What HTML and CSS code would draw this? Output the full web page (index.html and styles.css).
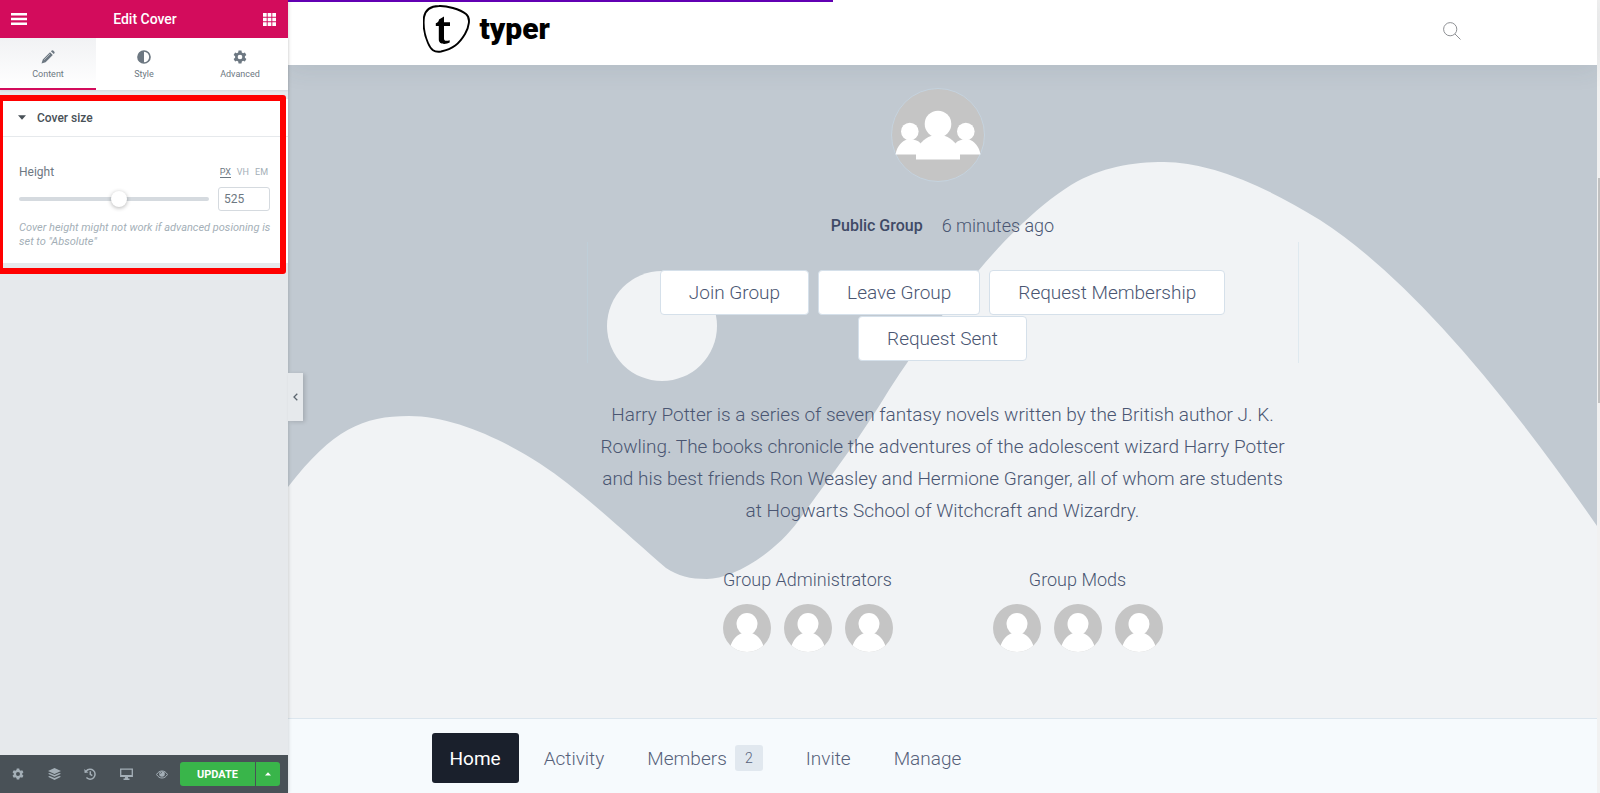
FILE: index.html
```html
<!DOCTYPE html>
<html lang="en">
<head>
<meta charset="utf-8">
<title>Edit Cover</title>
<link rel="stylesheet" href="styles.css">
</head>
<body>
<svg class="defs" aria-hidden="true">
  <symbol id="person" viewBox="0 0 48 48">
    <rect width="48" height="48" fill="#c5c5c5"/>
    <ellipse cx="24" cy="20" rx="10.500" ry="11" fill="#fff"/>
    <path d="M7 44C9 35 15 30 20 29L24 27L28 29C33 30 39 35 41 44V48H7Z" fill="#fff"/>
  </symbol>
</svg>
<div class="app">
  <aside class="panel">
    <header class="panel-head">
      <button class="icon-btn" aria-label="Menu"><svg width="16" height="12" viewBox="0 0 16 12" fill="#fff"><path d="M0 0h16v2.600H0zM0 4.700h16v2.600H0zM0 9.400h16V12H0z"/></svg></button>
      <h1>Edit Cover</h1>
      <button class="icon-btn" aria-label="Widgets"><svg width="13" height="13" viewBox="0 0 13 13" fill="#fff"><path d="M0 0h3.700v3.700H0zM4.650 0h3.700v3.700h-3.700zM9.300 0H13v3.700H9.300zM0 4.650h3.700v3.700H0zM4.650 4.650h3.700v3.700h-3.700zM9.300 4.650H13v3.700H9.300zM0 9.300h3.700V13H0zM4.650 9.300h3.700V13h-3.700zM9.300 9.300H13V13H9.300z"/></svg></button>
    </header>
    <nav class="tabs">
      <button class="tab active"><svg width="14" height="14" viewBox="0 0 14 14" fill="#6d7882"><path d="M9 2.200L11.800 5L4.600 12.200L.5 13.500L1.800 9.400ZM9.900 1.300L10.800.5Q11.500 0 12.200.6L13.400 1.800Q14 2.500 13.400 3.200L12.700 4.100Z"/><path d="M3.200 9.800L9 4" stroke="#f5f6f7" stroke-width=".5" fill="none"/></svg>Content</button>
      <button class="tab"><svg width="14" height="14" viewBox="0 0 14 14"><circle cx="7" cy="7" r="6" fill="none" stroke="#6d7882" stroke-width="1.700"/><path d="M7 1a6 6 0 0 0 0 12z" fill="#6d7882"/></svg>Style</button>
      <button class="tab"><svg width="14" height="14" viewBox="0 0 24 24"><path fill="#6d7882" fill-rule="evenodd" d="M9.500 1h5l.6 3.200 2.200 1.300 3.100-1.100 2.500 4.300-2.500 2.100v2.400l2.500 2.100-2.500 4.300-3.100-1.100-2.200 1.300-.6 3.200h-5l-.6-3.200-2.200-1.300-3.100 1.100-2.500-4.300 2.500-2.100v-2.400L1.100 8.700l2.500-4.300 3.100 1.100 2.200-1.300zM12 8a4 4 0 1 0 0 8 4 4 0 0 0 0-8z"/></svg>Advanced</button>
    </nav>
    <section class="section">
      <button class="section-head" aria-expanded="true"><svg width="8" height="5" viewBox="0 0 8 5" fill="#495157"><path d="M0 .3h8L4 4.800z"/></svg>Cover size</button>
      <div class="section-body">
        <div class="control-row">
          <label for="height-range">Height</label>
          <div class="units"><button class="unit on">PX</button><button class="unit">VH</button><button class="unit">EM</button></div>
        </div>
        <div class="slider-row">
          <input id="height-range" class="range" type="range" min="0" max="1000" value="530">
          <input class="number" type="text" value="525" aria-label="Height value">
        </div>
        <p class="note">Cover height might not work if advanced posioning is set to "Absolute"</p>
      </div>
      <div class="highlight"></div>
    </section>
    <footer class="panel-foot">
      <div class="tools">
        <button class="tool" aria-label="Settings"><svg width="12" height="12" viewBox="0 0 24 24"><path fill="#a4afb7" fill-rule="evenodd" d="M9.500 1h5l.6 3.200 2.200 1.300 3.100-1.100 2.500 4.300-2.500 2.100v2.400l2.500 2.100-2.500 4.300-3.100-1.100-2.200 1.300-.6 3.200h-5l-.6-3.200-2.200-1.300-3.100 1.100-2.500-4.300 2.500-2.100v-2.400L1.100 8.700l2.500-4.300 3.100 1.100 2.200-1.300zM12 8a4 4 0 1 0 0 8 4 4 0 0 0 0-8z"/></svg></button>
        <button class="tool" aria-label="Navigator"><svg width="13" height="12" viewBox="0 0 13 12" fill="#a4afb7"><path d="M6.500 0L13 3L6.500 6L0 3ZM1.700 4.900L6.500 7L11.300 4.900L13 5.800L6.500 8.800L0 5.800ZM1.700 7.900L6.500 10L11.300 7.900L13 8.800L6.500 12L0 8.800Z"/></svg></button>
        <button class="tool" aria-label="History"><svg width="12" height="12" viewBox="0 0 12 12" fill="none" stroke="#a4afb7" stroke-width="1.500"><path d="M2.200 3A5 5 0 1 1 2.400 9.600M6.300 3.300V6.400L8.300 7.700"/><path d="M.3 1L.6 4.900L4.400 4.500Z" fill="#a4afb7" stroke="none"/></svg></button>
        <button class="tool" aria-label="Responsive mode"><svg width="13" height="12" viewBox="0 0 13 12"><path d="M.7 1.200h11.600v7.200H.7z" fill="none" stroke="#a4afb7" stroke-width="1.300"/><path d="M1 7h11v1.500H1zM5.200 8.500h2.600l.4 2h1.300V12h-6v-1.500h1.300z" fill="#a4afb7"/></svg></button>
        <button class="tool" aria-label="Preview"><svg width="12" height="9" viewBox="0 0 12 9"><path d="M.6 4.500C3-.2 9-.2 11.400 4.500C9 9.200 3 9.200.6 4.500Z" fill="none" stroke="#a4afb7" stroke-width="1"/><circle cx="6" cy="4" r="2.800" fill="#a4afb7"/><path d="M4.500 3.800Q4.600 2.500 6 2.400" fill="none" stroke="#495157" stroke-width=".7"/></svg></button>
      </div>
      <div class="update"><button class="save">UPDATE</button><button class="more" aria-label="Save options"><svg width="6" height="4" viewBox="0 0 6 4" fill="#fff"><path d="M0 3.600L3 .3L6 3.600Z"/></svg></button></div>
    </footer>
    <button class="collapse" aria-label="Collapse panel"><svg width="5" height="8" viewBox="0 0 5 8" fill="none" stroke="#5c666f" stroke-width="1.300"><path d="M4.300.8L1 4L4.300 7.200"/></svg></button>
  </aside>

  <main class="site">
    <header class="site-head">
      <div class="progress"></div>
      <div class="container">
        <a class="brand" href="#">
          <svg width="48" height="48" viewBox="0 0 48 48"><path d="M16 1C23 .6 37 4 43 9C48 13 46 22 42 29C36 39 30 44 18 46.500C11 47.500 8 45 5 38C1 29 0 20 1 12C2.500 4 8.200 1.200 16 1Z" fill="none" stroke="#000" stroke-width="1.900"/><path d="M16 14.500L21 11.500V17.300H27V21H21V33.500C21 36 23 36.300 26.700 35.200V37.600C23 39.500 15.800 40 15.800 34.500V21H12.800V18.300C14.500 17.900 15.800 16.500 16 14.500Z"/></svg>
          <span>typer</span>
        </a>
        <button class="search" aria-label="Search"><svg width="18" height="18" viewBox="0 0 18 18" fill="none" stroke="#8e9094" stroke-width="1"><circle cx="7.200" cy="7.200" r="6.600"/><path d="M12 12L17.500 17.500"/></svg></button>
      </div>
    </header>

    <section class="cover">
      <svg class="waves" viewBox="0 0 1309 653" preserveAspectRatio="xMidYMid slice" aria-hidden="true">
        <path d="M0 422C45 364 75 351 121 351C175 351 240 387 279 418C310 442 350 479 378 503C390 511 402 514 419 514C442 514 484 492 511 455C545 408 572 373 601 325C630 279 660 243 691 205C722 168 753 139 783 120C813 102 845 97 876 97Q938 97 1032 155Q1150 231 1309 461V653H0Z"/>
        <circle cx="374" cy="261" r="55"/>
      </svg>
      <div class="cover-inner">
        <svg class="group-avatar" viewBox="0 0 94 94" role="img" aria-label="Group">
          <circle cx="47" cy="47" r="46.500" fill="#c5c5c5" stroke="#c5d3df"/>
          <g fill="#fff"><circle cx="47" cy="36" r="13.300"/><path d="M25 71.500V65C27 57 33 50 40 48L47 46L54 48C61 50 67 57 69 65V71.500Z"/><circle cx="18.800" cy="43.500" r="8.800"/><path d="M4.500 66.500C6 58 11 53 16 51.500H22C26 52 29 54 31 57L27 66.500Z"/><circle cx="74.800" cy="43.500" r="8.800"/><path d="M89.500 66.500C88 58 83 53 78 51.500H72C68 52 65 54 63 57L67 66.500Z"/></g>
        </svg>
        <div class="meta"><strong>Public Group</strong><span>6 minutes ago</span></div>
        <div class="actions">
          <button>Join Group</button><button>Leave Group</button><button>Request Membership</button><button>Request Sent</button>
        </div>
        <p class="about">Harry Potter is a series of seven fantasy novels written by the British author J. K.<br>Rowling. The books chronicle the adventures of the adolescent wizard Harry Potter<br>and his best friends Ron Weasley and Hermione Granger, all of whom are students<br>at Hogwarts School of Witchcraft and Wizardry.</p>
        <div class="people">
          <div class="people-col"><h2>Group Administrators</h2><div class="faces"><svg><use href="#person"/></svg><svg><use href="#person"/></svg><svg><use href="#person"/></svg></div></div>
          <div class="people-col"><h2>Group Mods</h2><div class="faces"><svg><use href="#person"/></svg><svg><use href="#person"/></svg><svg><use href="#person"/></svg></div></div>
        </div>
      </div>
    </section>

    <nav class="group-nav">
      <div class="container">
        <a class="current" href="#">Home</a><a href="#">Activity</a><a href="#">Members<span class="count">2</span></a><a href="#">Invite</a><a href="#">Manage</a>
      </div>
    </nav>
  </main>
  <div class="scrollbar"><div class="thumb"></div></div>
</div>
</body>
</html>
```
FILE: styles.css
```css
* { box-sizing: border-box; }
body { margin: 0; font-family: Roboto, "Liberation Sans", sans-serif; }
button { font: inherit; color: inherit; border: 0; background: none; padding: 0; margin: 0; }
h1, h2, p { margin: 0; }
.defs { display: none; }
.app { display: flex; min-height: 100vh; }

/* Editor panel */
.panel { position: relative; z-index: 2; flex: 0 0 288px; display: flex; flex-direction: column; background: #e6e9ec; box-shadow: 0 0 4px rgba(0, 0, 0, .2); color: #6d7882; }
.panel-head { display: flex; align-items: center; justify-content: space-between; height: 38px; padding: 0 12px 0 11px; background: #d30c5c; color: #fff; }
.panel-head h1 { font-size: 14px; font-weight: 500; }
.icon-btn { display: flex; }
.tabs { display: flex; height: 52px; background: #fff; box-shadow: 0 1px 2px rgba(0, 0, 0, .08); }
.tab { flex: 1; display: flex; flex-direction: column; align-items: center; gap: 4px; padding-top: 12px; font-size: 9px; line-height: 12px; border-bottom: 2px solid transparent; }
.tab.active { background: linear-gradient(#f1f2f4, #fff); border-bottom-color: #d30c5c; }
.section { position: relative; margin-top: 9px; background: #fff; }
.section-head { display: flex; align-items: center; gap: 11px; width: 100%; height: 38px; padding: 0 18px; border-bottom: 1px solid #e6e9ec; font-size: 12px; font-weight: 500; color: #495157; }
.section-body { padding: 26px 18px 14px 19px; }
.control-row { display: flex; justify-content: space-between; align-items: center; height: 18px; font-size: 12px; }
.units { display: flex; gap: 6px; padding: 2px 2px 0 0; }
.unit { font-size: 9px; line-height: 9px; color: #a4afb7; border-bottom: 1px solid transparent; }
.unit.on { color: #6d7882; border-bottom-color: #6d7882; }
.slider-row { display: flex; align-items: center; gap: 9px; margin-top: 6px; }
.range { flex: 1; min-width: 0; margin: 0; height: 16px; appearance: none; background: none; }
.range::-webkit-slider-runnable-track { height: 4px; border-radius: 2px; background: #d5dadf; }
.range::-webkit-slider-thumb { appearance: none; width: 16px; height: 16px; margin-top: -6px; border-radius: 50%; background: #fff; box-shadow: 0 1px 4px rgba(0, 0, 0, .3); }
.number { width: 52px; height: 24px; padding: 0 5px; border: 1px solid #d5dadf; border-radius: 3px; font: 12px Roboto, sans-serif; color: #6d7882; }
.note { margin: 10px -8px 0 0; font-size: 11px; line-height: 14px; font-style: italic; color: #a4afb7; }
.highlight { position: absolute; inset: -4px 2px -11px -3px; border: 6px solid #f00; border-radius: 3px; pointer-events: none; }
.panel-foot { display: flex; align-items: center; justify-content: space-between; height: 38px; margin-top: auto; padding-right: 8px; background: #495157; }
.tools { display: flex; }
.tool { display: flex; align-items: center; justify-content: center; width: 36px; height: 38px; }
.update { display: flex; gap: 1px; height: 24px; color: #fff; }
.save { width: 75px; background: #39b54a; border-radius: 3px 0 0 3px; font-size: 11px; font-weight: 700; }
.more { display: flex; align-items: center; justify-content: center; width: 24px; background: #39b54a; border-radius: 0 3px 3px 0; }
.collapse { position: absolute; left: 100%; top: 47%; display: flex; align-items: center; justify-content: center; width: 15px; height: 48px; background: #e6e9ec; box-shadow: 2px 1px 4px rgba(0, 0, 0, .15); }

/* Site preview */
.site { flex: 1; min-width: 0; display: flex; flex-direction: column; color: #4a5672; }
.container { display: flex; align-items: center; width: 100%; max-width: 1040px; margin: 0 auto; }
.site-head { position: relative; z-index: 1; height: 65px; background: #fff; box-shadow: 0 4px 24px rgba(60, 75, 90, .1); }
.site-head .container { justify-content: space-between; padding-top: 5px; }
.progress { position: absolute; left: 0; top: 0; width: 41.6%; height: 2px; background: #6200b3; }
.brand { display: flex; align-items: center; gap: 9px; color: #000; text-decoration: none; font-size: 30px; line-height: 48px; font-weight: 900; }
.search { display: flex; padding: 4px 2px 0; }
.cover { position: relative; flex: 1; background: #c1c9d1; }
.waves { position: absolute; inset: 0; width: 100%; height: 100%; fill: #f1f3f5; }
.cover-inner { position: relative; display: flex; flex-direction: column; align-items: center; padding: 23px 16px 66px; }
.group-avatar { width: 94px; height: 94px; margin-right: 9px; }
.meta { display: flex; gap: 19px; margin-top: 28px; font-size: 18px; line-height: 32px; font-weight: 300; }
.meta strong { font-size: 16px; font-weight: 500; color: #3f4a66; }
.actions { display: flex; flex-wrap: wrap; justify-content: center; gap: 1px 9px; width: 100%; max-width: 712px; padding: 28px 56px 2px; border: solid rgba(190, 215, 228, .35); border-width: 0 1px; }
.actions button { height: 45px; padding: 0 28px; border: 1px solid #d5e0ea; border-radius: 4px; background: #fff; font-size: 19px; font-weight: 300; }
.about { margin-top: 36px; font-size: 19px; line-height: 32px; font-weight: 300; text-align: center; }
.people { display: grid; grid-template-columns: 1fr 1fr; width: 100%; max-width: 540px; margin-top: 41px; }
.people-col { display: flex; flex-direction: column; align-items: center; gap: 12px; }
.people h2 { font-size: 18px; line-height: 24px; font-weight: 300; }
.faces { display: flex; gap: 13px; }
.faces svg { width: 48px; height: 48px; border-radius: 50%; }
.group-nav { padding: 14px 0 10px; background: #f6fafd; border-top: 1px solid #dce6ee; }
.group-nav .container { gap: 7px; padding-left: 9px; }
.group-nav a { display: flex; align-items: center; height: 50px; padding: 0 18px; border-radius: 3px; color: #56617a; text-decoration: none; font-size: 19px; font-weight: 300; }
.group-nav .current { background: #1a202c; color: #fff; font-weight: 400; }
.count { margin-left: 8px; width: 28px; line-height: 26px; border-radius: 3px; background: #e1e8ef; text-align: center; font-size: 14px; }
.scrollbar { flex: 0 0 3px; background: #f1f1f1; display: flex; flex-direction: column; }
.scrollbar::before { content: ""; flex: 178; }
.scrollbar::after { content: ""; flex: 390; }
.thumb { flex: 225; margin-left: 1px; background: #c1c1c1; }
```
